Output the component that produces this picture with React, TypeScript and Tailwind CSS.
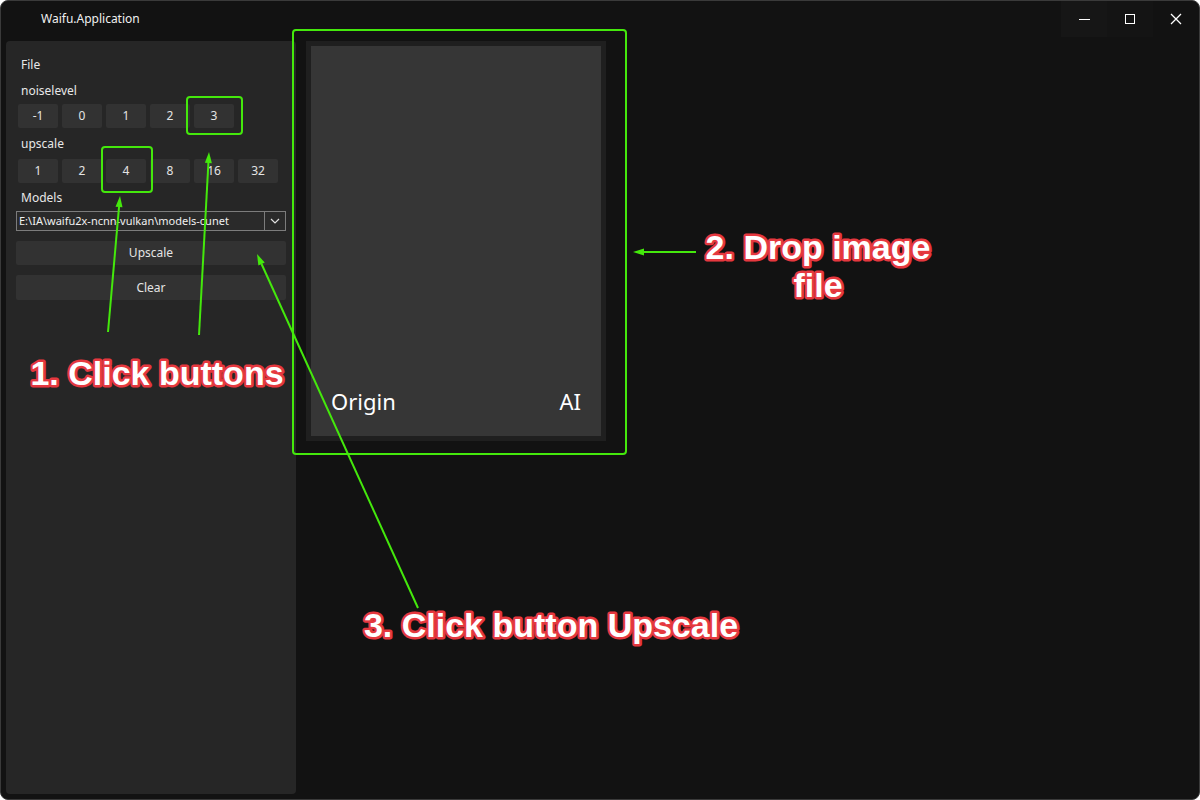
import React from 'react';

const noise = ['-1', '0', '1', '2', '3'];
const scales = ['1', '2', '4', '8', '16', '32'];

const Btn: React.FC<{ label: string }> = ({ label }) => (
    <button className="w-[40px] h-[24px] rounded-[2px] bg-[#323232] text-[12px] text-[#e4e4e4] flex items-center justify-center">
        {label}
    </button>
);

const Label: React.FC<{ text: string }> = ({ text }) => (
    <div className="pl-[15px] h-[16px] leading-[16px] text-[12px] text-[#e8e8e8]">{text}</div>
);

const Arrow: React.FC<{ x1: number; y1: number; x2: number; y2: number }> = ({ x1, y1, x2, y2 }) => {
    const a = Math.atan2(y2 - y1, x2 - x1);
    const len = 11;
    const w = 3.5;
    const bx = x2 - Math.cos(a) * len;
    const by = y2 - Math.sin(a) * len;
    const px = -Math.sin(a) * w;
    const py = Math.cos(a) * w;
    return (
        <g>
            <line x1={x1} y1={y1} x2={bx} y2={by} stroke="#44e80c" strokeWidth={2} />
            <polygon points={`${x2},${y2} ${bx + px},${by + py} ${bx - px},${by - py}`} fill="#44e80c" />
        </g>
    );
};

const Note: React.FC<{ x: number; y: number; children: React.ReactNode }> = ({ x, y, children }) => (
    <text
        x={x}
        y={y}
        textAnchor="middle"
        fontFamily="'Liberation Sans', Arial, sans-serif"
        fontWeight={700}
        fontSize={34}
        fill="#ffffff"
        stroke="#e5383f"
        strokeWidth={5}
        strokeLinejoin="round"
        paintOrder="stroke"
    >
        {children}
    </text>
);

export default function App() {
    return (
        <div className="relative w-[1200px] h-[800px] bg-[#121212] overflow-hidden rounded-[8px] border border-[#3a3a3a] flex flex-col" style={{ fontFamily: "'Noto Sans', 'Open Sans', sans-serif" }}>
            {/* title bar */}
            <div className="h-[40px] flex items-start shrink-0">
                <div className="pl-[40px] pt-[10px] text-[12px] text-[#f0f0f0] leading-[16px]">Waifu.Application</div>
                <div className="ml-auto flex h-[36px]">
                    <div className="w-[46px] h-full bg-[#161616] flex items-center justify-center">
                        <div className="w-[11px] h-[1px] bg-white" />
                    </div>
                    <div className="w-[46px] h-full bg-[#141414] flex items-center justify-center">
                        <div className="w-[10px] h-[10px] border border-white" />
                    </div>
                    <div className="w-[46px] h-full flex items-center justify-center">
                        <svg width="12" height="12" viewBox="0 0 12 12">
                            <path d="M1 1 L11 11 M11 1 L1 11" stroke="white" strokeWidth="1.3" />
                        </svg>
                    </div>
                </div>
            </div>

            {/* body */}
            <div className="flex-1 flex pl-[5px] pb-[5px]">
                <aside className="w-[290px] h-full bg-[#262626] rounded-[4px] pt-[16px] flex flex-col">
                    <Label text="File" />
                    <div className="mt-[10px]"><Label text="noiselevel" /></div>
                    <div className="mt-[5px] ml-[12px] flex gap-[4px]">
                        {noise.map((n) => <Btn key={n} label={n} />)}
                    </div>
                    <div className="mt-[8px]"><Label text="upscale" /></div>
                    <div className="mt-[7px] ml-[12px] flex gap-[4px]">
                        {scales.map((n) => <Btn key={n} label={n} />)}
                    </div>
                    <div className="mt-[7px]"><Label text="Models" /></div>
                    <div className="mt-[5px] ml-[10px] w-[270px] h-[20px] border border-[#7c7c7c] bg-[#2a2a2a] flex items-center">
                        <div className="flex-1 pl-[2px] text-[11px] text-[#f0f0f0] leading-[18px] truncate">E:\IA\waifu2x-ncnn-vulkan\models-cunet</div>
                        <div className="w-[21px] h-full border-l border-[#7c7c7c] flex items-center justify-center">
                            <svg width="10" height="6" viewBox="0 0 10 6">
                                <path d="M1 1 L5 5 L9 1" stroke="#e0e0e0" strokeWidth="1.2" fill="none" />
                            </svg>
                        </div>
                    </div>
                    <button className="mt-[10px] ml-[10px] w-[270px] h-[24px] rounded-[2px] bg-[#323232] text-[12px] text-[#e4e4e4]">Upscale</button>
                    <button className="mt-[10px] ml-[10px] w-[270px] h-[25px] rounded-[2px] bg-[#323232] text-[12px] text-[#e4e4e4]">Clear</button>
                </aside>

                <main className="ml-[10px]">
                    <div className="w-[300px] h-[400px] bg-[#1f1f1f] p-[5px]">
                        <div className="w-full h-full bg-[#363636] flex items-end justify-between px-[20px] pb-[20px]">
                            <span className="text-[22px] text-white leading-[30px]">Origin</span>
                            <span className="text-[22px] text-white leading-[30px]">AI</span>
                        </div>
                    </div>
                </main>
            </div>

            {/* annotations overlay */}
            <svg className="absolute left-[-1px] top-[-1px] pointer-events-none" width="1200" height="800" viewBox="0 0 1200 800">
                <rect x="187" y="97" width="55" height="37" rx="3" fill="none" stroke="#44e80c" strokeWidth="2" />
                <rect x="102" y="147" width="50" height="45" rx="3" fill="none" stroke="#44e80c" strokeWidth="2" />
                <rect x="293" y="30" width="333" height="424" rx="3" fill="none" stroke="#44e80c" strokeWidth="2" />
                <Arrow x1={108} y1={332} x2={120} y2={196} />
                <Arrow x1={199} y1={335} x2={209} y2={152} />
                <Arrow x1={418} y1={608} x2={257} y2={254} />
                <Arrow x1={696} y1={252} x2={633} y2={252} />
                <Note x={157} y={385}>1. Click buttons</Note>
                <Note x={818} y={259}>2. Drop image</Note>
                <Note x={818} y={297}>file</Note>
                <Note x={551} y={637}>3. Click button Upscale</Note>
            </svg>
        </div>
    );
}
